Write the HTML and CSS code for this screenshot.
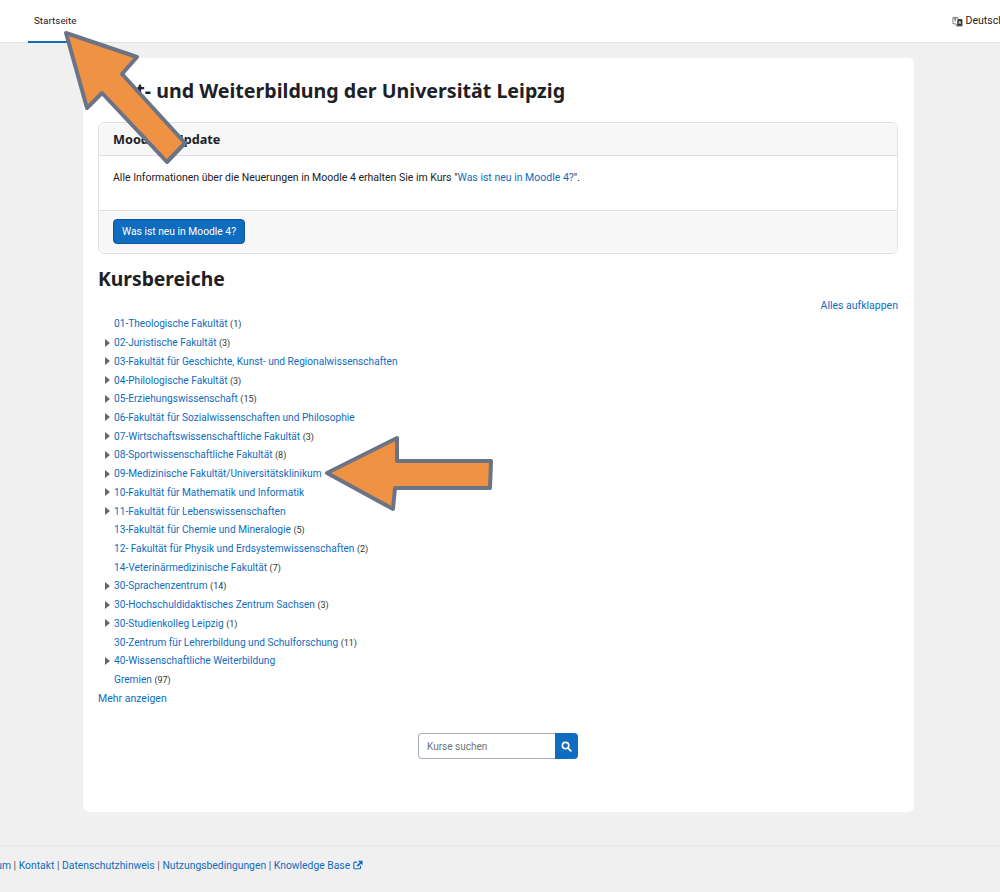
FILE: index.html
```html
<!DOCTYPE html>
<html lang="de">
<head>
<meta charset="utf-8">
<title>Moodle</title>
<link rel="stylesheet" href="styles.css">
</head>
<body>
<header class="topbar">
  <nav class="tabs"><a class="tab active" href="#">Startseite</a></nav>
  <div class="lang">
    <svg class="lang-icon" viewBox="0 0 12 12" width="11" height="11"><path d="M1 1.500h5l1 2.500h4v7H5l-1-2.500H1z" fill="#fff" stroke="#555" stroke-width="0.8"/><path d="M6 3.500h5v7H5.500z" fill="#333"/><path d="M2 3h3M3.500 3v3" stroke="#333" stroke-width="0.8" fill="none"/><path d="M7.500 8.500l1-3 1 3M8 7.500h1" stroke="#fff" stroke-width="0.8" fill="none"/></svg>
    <span>Deutsch</span>
  </div>
</header>
<main class="card">
  <h1 class="title">Fort- und Weiterbildung der Universität Leipzig</h1>
  <section class="panel">
    <div class="panel-head">Moodle 4 Update</div>
    <div class="panel-body">Alle Informationen über die Neuerungen in Moodle 4 erhalten Sie im Kurs "<a href="#">Was ist neu in Moodle 4?</a>".</div>
    <div class="panel-foot"><a class="btn" href="#">Was ist neu in Moodle 4?</a></div>
  </section>
  <h2 class="heading">Kursbereiche</h2>
  <div class="expand"><a href="#">Alles aufklappen</a></div>
  <ul class="cats">
    <li><a href="#">01-Theologische Fakultät</a> <small>(1)</small></li>
    <li class="has"><a href="#">02-Juristische Fakultät</a> <small>(3)</small></li>
    <li class="has"><a href="#">03-Fakultät für Geschichte, Kunst- und Regionalwissenschaften</a></li>
    <li class="has"><a href="#">04-Philologische Fakultät</a> <small>(3)</small></li>
    <li class="has"><a href="#">05-Erziehungswissenschaft</a> <small>(15)</small></li>
    <li class="has"><a href="#">06-Fakultät für Sozialwissenschaften und Philosophie</a></li>
    <li class="has"><a href="#">07-Wirtschaftswissenschaftliche Fakultät</a> <small>(3)</small></li>
    <li class="has"><a href="#">08-Sportwissenschaftliche Fakultät</a> <small>(8)</small></li>
    <li class="has"><a href="#">09-Medizinische Fakultät/Universitätsklinikum</a></li>
    <li class="has"><a href="#">10-Fakultät für Mathematik und Informatik</a></li>
    <li class="has"><a href="#">11-Fakultät für Lebenswissenschaften</a></li>
    <li><a href="#">13-Fakultät für Chemie und Mineralogie</a> <small>(5)</small></li>
    <li><a href="#">12- Fakultät für Physik und Erdsystemwissenschaften</a> <small>(2)</small></li>
    <li><a href="#">14-Veterinärmedizinische Fakultät</a> <small>(7)</small></li>
    <li class="has"><a href="#">30-Sprachenzentrum</a> <small>(14)</small></li>
    <li class="has"><a href="#">30-Hochschuldidaktisches Zentrum Sachsen</a> <small>(3)</small></li>
    <li class="has"><a href="#">30-Studienkolleg Leipzig</a> <small>(1)</small></li>
    <li><a href="#">30-Zentrum für Lehrerbildung und Schulforschung</a> <small>(11)</small></li>
    <li class="has"><a href="#">40-Wissenschaftliche Weiterbildung</a></li>
    <li><a href="#">Gremien</a> <small>(97)</small></li>
  </ul>
  <div class="more"><a href="#">Mehr anzeigen</a></div>
  <form class="search">
    <input class="search-input" type="text" placeholder="Kurse suchen">
    <button class="search-btn" type="button" aria-label="Suchen">
      <svg viewBox="0 0 12 12" width="11" height="11"><circle cx="5" cy="5" r="3.500" fill="none" stroke="#fff" stroke-width="1.700"/><path d="M7.700 7.700l3 3" stroke="#fff" stroke-width="2" stroke-linecap="round"/></svg>
    </button>
  </form>
</main>
<footer class="foot">
  <div class="foot-links">
    <a href="#">Impressum</a> | <a href="#">Kontakt</a> | <a href="#">Datenschutzhinweis</a> | <a href="#">Nutzungsbedingungen</a> | <a href="#">Knowledge Base</a>
    <svg class="ext" viewBox="0 0 12 12" width="10" height="10"><path d="M9 7v2.500a1 1 0 0 1-1 1H2a1 1 0 0 1-1-1V3.500a1 1 0 0 1 1-1h3" fill="none" stroke="#0f6cbf" stroke-width="1.300"/><path d="M6 1h5.500v5.200L9.600 4.400 5.800 8.200 4.300 6.700l3.800-3.800z" fill="#0f6cbf"/></svg>
  </div>
</footer>
<svg class="arrow" viewBox="0 0 1000 892" width="1000" height="892">
  <path d="M66 33L137 57L122 74L185 143L167 162L102 93L87 108Z" fill="#f09243" stroke="#6b7385" stroke-width="4" stroke-linejoin="round"/>
  <path d="M327 473L397 438L397 461L491 461L490 488L395 488L393 509Z" fill="#f09243" stroke="#6b7385" stroke-width="4" stroke-linejoin="round"/>
</svg>
</body>
</html>
```
FILE: styles.css
```css
* { box-sizing: border-box; }
html, body { margin: 0; padding: 0; height: 892px; overflow: hidden; }
body {
  background: #f0f0f1;
  color: #1d2125;
  font-family: Roboto, "Noto Sans", sans-serif;
  font-size: 10.5px;
  line-height: 1.5;
  position: relative;
}
a { color: #0f6cbf; text-decoration: none; }

.topbar {
  height: 43px;
  background: #fff;
  border-bottom: 1px solid #dee2e6;
  display: flex;
  justify-content: space-between;
  padding-left: 28px;
  margin-right: -4px;
}
.tabs { display: flex; }
.tab {
  color: #1d2125;
  font-size: 9.900px;
  padding: 0 6px;
  height: 43px;
  line-height: 42px;
  border-bottom: 2px solid #0f6cbf;
}
.lang { display: flex; align-items: center; gap: 3px; height: 42px; }
.lang-icon { display: block; }

.card {
  width: 831px;
  height: 754px;
  margin: 15px 0 0 83px;
  background: #fff;
  border-radius: 6px;
  padding: 18px 16px 0 15px;
}
.title {
  margin: 0 0 0 6.500px;
  font-family: "Noto Sans", sans-serif;
  font-size: 19.630px;
  font-weight: 700;
  line-height: 30px;
}
.panel {
  margin-top: 16px;
  border: 1px solid #dee2e6;
  border-radius: 6px;
  overflow: hidden;
}
.panel-head {
  height: 33px;
  padding: 0 14px;
  background: #f7f7f7;
  border-bottom: 1px solid #dee2e6;
  font-family: "Noto Sans", sans-serif;
  font-size: 12.700px;
  font-weight: 700;
  line-height: 32px;
}
.panel-body { height: 54px; padding: 14px 14px 0; }
.panel-foot {
  height: 43px;
  padding: 8px 14px;
  background: #f7f7f7;
  border-top: 1px solid #dee2e6;
}
.btn {
  display: inline-block;
  height: 25px;
  line-height: 23px;
  padding: 0 8px;
  font-size: 10.300px;
  color: #fff;
  background: #0f6cbf;
  border: 1px solid #0c5699;
  border-radius: 4px;
}
.heading {
  margin: 10px 0 0;
  font-family: "Noto Sans", sans-serif;
  font-size: 19.300px;
  font-weight: 700;
  line-height: 30px;
}
.expand { text-align: right; margin-top: 3px; line-height: 18px; }
.cats { list-style: none; margin: 0; padding: 0.4px 0 0; font-size: 10.150px; }
.cats li {
  position: relative;
  height: 18.72px;
  line-height: 18.72px;
  padding-left: 16px;
}
.cats small { font-size: 9px; color: #333; }
.cats li.has::before {
  content: "";
  position: absolute;
  left: 7px;
  top: 4.500px;
  border-left: 5px solid #666;
  border-top: 4.500px solid transparent;
  border-bottom: 4.500px solid transparent;
}
.more { line-height: 18px; padding-top: 0.6px; height: 18px; }
.search { display: flex; width: 160px; height: 26px; margin: 25.600px auto 0; }
.search-input {
  flex: 1;
  min-width: 0;
  border: 1px solid #a9adb5;
  border-right: 0;
  border-radius: 4px 0 0 4px;
  padding: 0 8px;
  font: inherit;
  font-size: 10px;
  outline: 0;
}
.search-input::placeholder { color: #6a737b; opacity: 1; }
.search-btn {
  width: 23px;
  padding: 0;
  border: 0;
  background: #0f6cbf;
  border-radius: 0 4px 4px 0;
  display: flex;
  align-items: center;
  justify-content: center;
}

.foot {
  margin-top: 33px;
  border-top: 2px solid #e9e9ee;
  height: 46px;
}
.foot-links { margin-left: -41px; padding-top: 11px; font-size: 10.350px; color: #555; white-space: nowrap; }
.ext { vertical-align: -0.5px; }

.arrow { position: absolute; left: 0; top: 0; pointer-events: none; }
```
